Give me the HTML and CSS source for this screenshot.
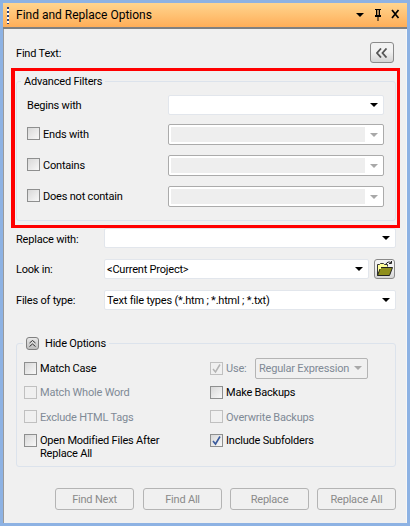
FILE: index.html
```html
<!DOCTYPE html>
<html lang="en">
<head>
    <meta charset="UTF-8">
    <title>Find and Replace Options</title>
    <link rel="stylesheet" href="styles.css">
</head>
<body>
    <div class="panel">
        <div class="titlebar">
            <span class="gripper"></span>
            <span class="title">Find and Replace Options</span>
            <svg class="title-icons" width="46" height="14" viewBox="0 0 46 14">
                <path d="M0 5h8l-4 4z" fill="#000"/>
                <path d="M19 1h6v1h-1v5h1v2h-6V7h1V2h-1zM21.5 9h1v4h-1z" fill="#000"/>
                <path d="M22 2v5" stroke="#ffc27c" stroke-width="1.4"/>
                <path d="M36 2l6.500 8M42.500 2L36 10" stroke="#000" stroke-width="1.700" fill="none"/>
            </svg>
        </div>

        <div class="find-row">
            <span class="find-label">Find Text:</span>
            <button class="icon-btn collapse-btn">
                <svg width="12" height="10" viewBox="0 0 12 10"><path d="M5 0.500L1 5l4 4.500M10.500 0.500L6.500 5l4 4.500" fill="none" stroke="#555" stroke-width="1.800"/></svg>
            </button>
        </div>

        <div class="highlight">
            <fieldset class="group filters">
                <legend>Advanced Filters</legend>
                <div class="filter-row first">
                    <span class="filter-label">Begins with</span>
                    <div class="combo filter-combo"><span class="arrow"></span></div>
                </div>
                <div class="filter-row">
                    <label class="filter-label"><span class="check"></span>Ends with</label>
                    <div class="combo filter-combo off"><span class="well"></span><span class="arrow"></span></div>
                </div>
                <div class="filter-row">
                    <label class="filter-label"><span class="check"></span>Contains</label>
                    <div class="combo filter-combo off"><span class="well"></span><span class="arrow"></span></div>
                </div>
                <div class="filter-row">
                    <label class="filter-label"><span class="check"></span>Does not contain</label>
                    <div class="combo filter-combo off"><span class="well"></span><span class="arrow"></span></div>
                </div>
            </fieldset>
        </div>

        <div class="fields">
            <div class="field-row">
                <span class="field-label replace-label">Replace with:</span>
                <div class="combo grow"><span class="arrow"></span></div>
            </div>
            <div class="field-row">
                <span class="field-label">Look in:</span>
                <div class="combo grow"><span class="value">&lt;Current Project&gt;</span><span class="arrow"></span></div>
                <button class="icon-btn folder-btn">
                    <svg width="18" height="16" viewBox="0 0 18 16">
                        <path d="M10 3c1-2 3-2.500 5-1.500M15.500 0v2.500H13" fill="none" stroke="#222" stroke-width="1"/>
                        <path d="M1.500 14.500v-11h2l1-1h3l1 1h3v2" fill="#ffff99" stroke="#333"/>
                        <path d="M1.500 14.500l3-8h12l-3 8z" fill="#8f8f1c" stroke="#222"/>
                        <path d="M3 6h2v2H3z" fill="#ffff99"/>
                    </svg>
                </button>
            </div>
            <div class="field-row">
                <span class="field-label">Files of type:</span>
                <div class="combo grow"><span class="value">Text file types (*.htm ; *.html ; *.txt)</span><span class="arrow"></span></div>
            </div>
        </div>

        <fieldset class="group options">
            <legend class="options-legend">
                <span class="hide-btn">
                    <svg width="9" height="9" viewBox="0 0 9 9"><path d="M1.500 4L4.500 1.500 7.500 4M1.500 7.500L4.500 5 7.500 7.500" fill="none" stroke="#333" stroke-width="1"/></svg>
                </span>
                Hide Options
            </legend>
            <div class="options-grid">
                <label class="option"><span class="check"></span>Match Case</label>
                <div class="option disabled use-option">
                    <span class="check checked"><svg width="11" height="11" viewBox="0 0 11 11"><path d="M2 6l2.500 3L9 1.500" fill="none" stroke="#b4b4b4" stroke-width="1.500"/></svg></span>Use:
                    <div class="select"><span>Regular Expression</span><span class="arrow"></span></div>
                </div>
                <label class="option disabled"><span class="check"></span>Match Whole Word</label>
                <label class="option"><span class="check"></span>Make Backups</label>
                <label class="option disabled"><span class="check"></span>Exclude HTML Tags</label>
                <label class="option disabled"><span class="check"></span>Overwrite Backups</label>
                <label class="option top"><span class="check"></span><span>Open Modified Files After<br>Replace All</span></label>
                <label class="option top"><span class="check checked"><svg width="11" height="11" viewBox="0 0 11 11"><path d="M2 6l2.500 3L9 1.500" fill="none" stroke="#3a5a9c" stroke-width="1.600"/></svg></span>Include Subfolders</label>
            </div>
        </fieldset>

        <div class="actions">
            <button class="btn wide-gap">Find Next</button>
            <button class="btn">Find All</button>
            <button class="btn">Replace</button>
            <button class="btn">Replace All</button>
        </div>
    </div>
</body>
</html>
```

FILE: styles.css
```css
* {
    box-sizing: border-box;
}
html, body {
    margin: 0;
    height: 526px;
    overflow: hidden;
}
body {
    background-color: #8db2e3;
    padding: 3px 3px 3px 3px;
    font-family: Roboto, 'Liberation Sans', Arial, sans-serif;
    font-size: 11px;
    line-height: 14px;
    letter-spacing: -0.2px;
    color: #000;
}
.panel {
    width: 404px;
    height: 520px;
    background-color: #f0f0f0;
    border-left: 1px solid #9a9a9a;
    border-right: 1px solid #f7f7f7;
}
.titlebar {
    height: 26px;
    display: flex;
    align-items: center;
    background: linear-gradient(#ffd58f, #ffae58);
    border-bottom: 2px solid #808080;
    margin-left: -1px;
    margin-right: -1px;
    padding-left: 4px;
}
.gripper {
    width: 2px;
    height: 17px;
    background: repeating-linear-gradient(#2b3f7c 0 2px, #fff 2px 4px);
}
.title {
    margin-left: 7px;
    font-size: 12px;
    letter-spacing: 0;
}
.title-icons {
    margin-left: auto;
    margin-right: 5px;
}

.find-row {
    display: flex;
    justify-content: space-between;
    align-items: center;
    margin-top: 13px;
    height: 21px;
    padding: 0 12px 0 12px;
}
/* labels sit a pixel lower than their box centre */
.find-label, .field-label, .first .filter-label, .option, .value, .select {
    padding-top: 2px;
}
.field-label.replace-label {
    padding-top: 4px;
}
.icon-btn {
    display: flex;
    align-items: center;
    justify-content: center;
    padding: 0;
    border: 1px solid #8a8a8a;
    border-radius: 3px;
    background: linear-gradient(#f2f2f2 45%, #d4d4d4);
}
.collapse-btn {
    width: 24px;
    height: 21px;
}
.folder-btn {
    width: 21px;
    height: 20px;
    margin: 0 1px 0 5px;
}

.highlight {
    margin: 5px 6px 0 7px;
    height: 160px;
    border: 3px solid #f00;
    border-left-width: 4px;
    padding: 3px 1px 0 1px;
}
.group {
    margin: 0;
    min-width: 0;
    border: 1px solid #dce3ec;
    border-radius: 3px;
}
legend {
    padding: 1px 3px 0 3px;
    margin-left: -6px;
}
.filters {
    height: 147px;
    padding: 6px 11px 0 10px;
}
.filter-row {
    display: flex;
    justify-content: space-between;
    align-items: center;
    height: 21px;
    margin-bottom: 10px;
}
.filter-row.first {
    height: 20px;
    margin-bottom: 9px;
}
.filter-label {
    display: flex;
    align-items: center;
}

.combo {
    position: relative;
    display: flex;
    align-items: center;
    height: 20px;
    background-color: #fff;
    border: 1px solid #e2e6ec;
    border-radius: 2px;
    padding-left: 2px;
}
.grow {
    flex: 1;
}
.filter-combo {
    width: 216px;
}
.combo.off {
    height: 21px;
    padding: 2px 18px 2px 2px;
    border-color: #ababab;
}
.well {
    flex: 1;
    height: 100%;
    background-color: #eeeeee;
}
.arrow {
    position: absolute;
    right: 5px;
    top: 50%;
    margin-top: -2px;
    border-left: 4px solid transparent;
    border-right: 4px solid transparent;
    border-top: 4px solid #000;
}
.off .arrow, .select .arrow {
    border-top-color: #a8a8a8;
}

.fields {
    display: flex;
    flex-direction: column;
    gap: 11px;
    padding: 0 10px 0 12px;
}
.field-row {
    display: flex;
    align-items: center;
    height: 20px;
}
.field-label {
    width: 88px;
}

.options {
    margin: 26px 10px 0 12px;
    height: 131px;
    padding: 0;
}
.options-legend {
    display: flex;
    align-items: center;
    gap: 6px;
    margin-left: 6px;
}
.hide-btn {
    display: flex;
    align-items: center;
    justify-content: center;
    width: 13px;
    height: 13px;
    margin-top: -2px;
    border: 1px solid #808080;
    border-radius: 3px;
    background: linear-gradient(#e8e8e8, #bdbdbd);
}
.options-grid {
    display: grid;
    grid-template-columns: 186px 1fr;
    grid-template-rows: 24px 24px 25px auto;
    padding: 5px 0 0 7px;
}
.option {
    display: flex;
    align-items: center;
}
.option.top {
    align-items: flex-start;
    padding-top: 5px;
    line-height: 13px;
}
.disabled {
    color: #7f8a96;
}
.check {
    display: flex;
    flex: none;
    align-items: center;
    justify-content: center;
    width: 13px;
    height: 13px;
    margin: -2px 3px 0 0;
    border: 1px solid #8e8f8f;
    background: linear-gradient(135deg, #d8d8d8, #f8f8f8);
}
.top .check {
    margin-top: 0;
}
.disabled .check {
    border-color: #c0c0c0;
    background: #f0f0f0;
}
.use-option {
    width: 158px;
}
.select {
    position: relative;
    display: flex;
    align-items: center;
    width: 113px;
    height: 21px;
    margin: -2px 0 0 auto;
    padding-left: 3px;
    border: 1px solid #b4b4b4;
    border-radius: 2px;
}

.actions {
    display: flex;
    justify-content: flex-end;
    gap: 8px;
    margin-top: 21px;
    padding-right: 10px;
}
.btn {
    width: 79px;
    height: 22px;
    padding: 2px 0 0 0;
    font: inherit;
    letter-spacing: inherit;
    color: #8a8a8a;
    background-color: #f0f0f0;
    border: 1px solid #b4b4b4;
    border-radius: 3px;
}
.wide-gap {
    margin-right: 1px;
}
```
